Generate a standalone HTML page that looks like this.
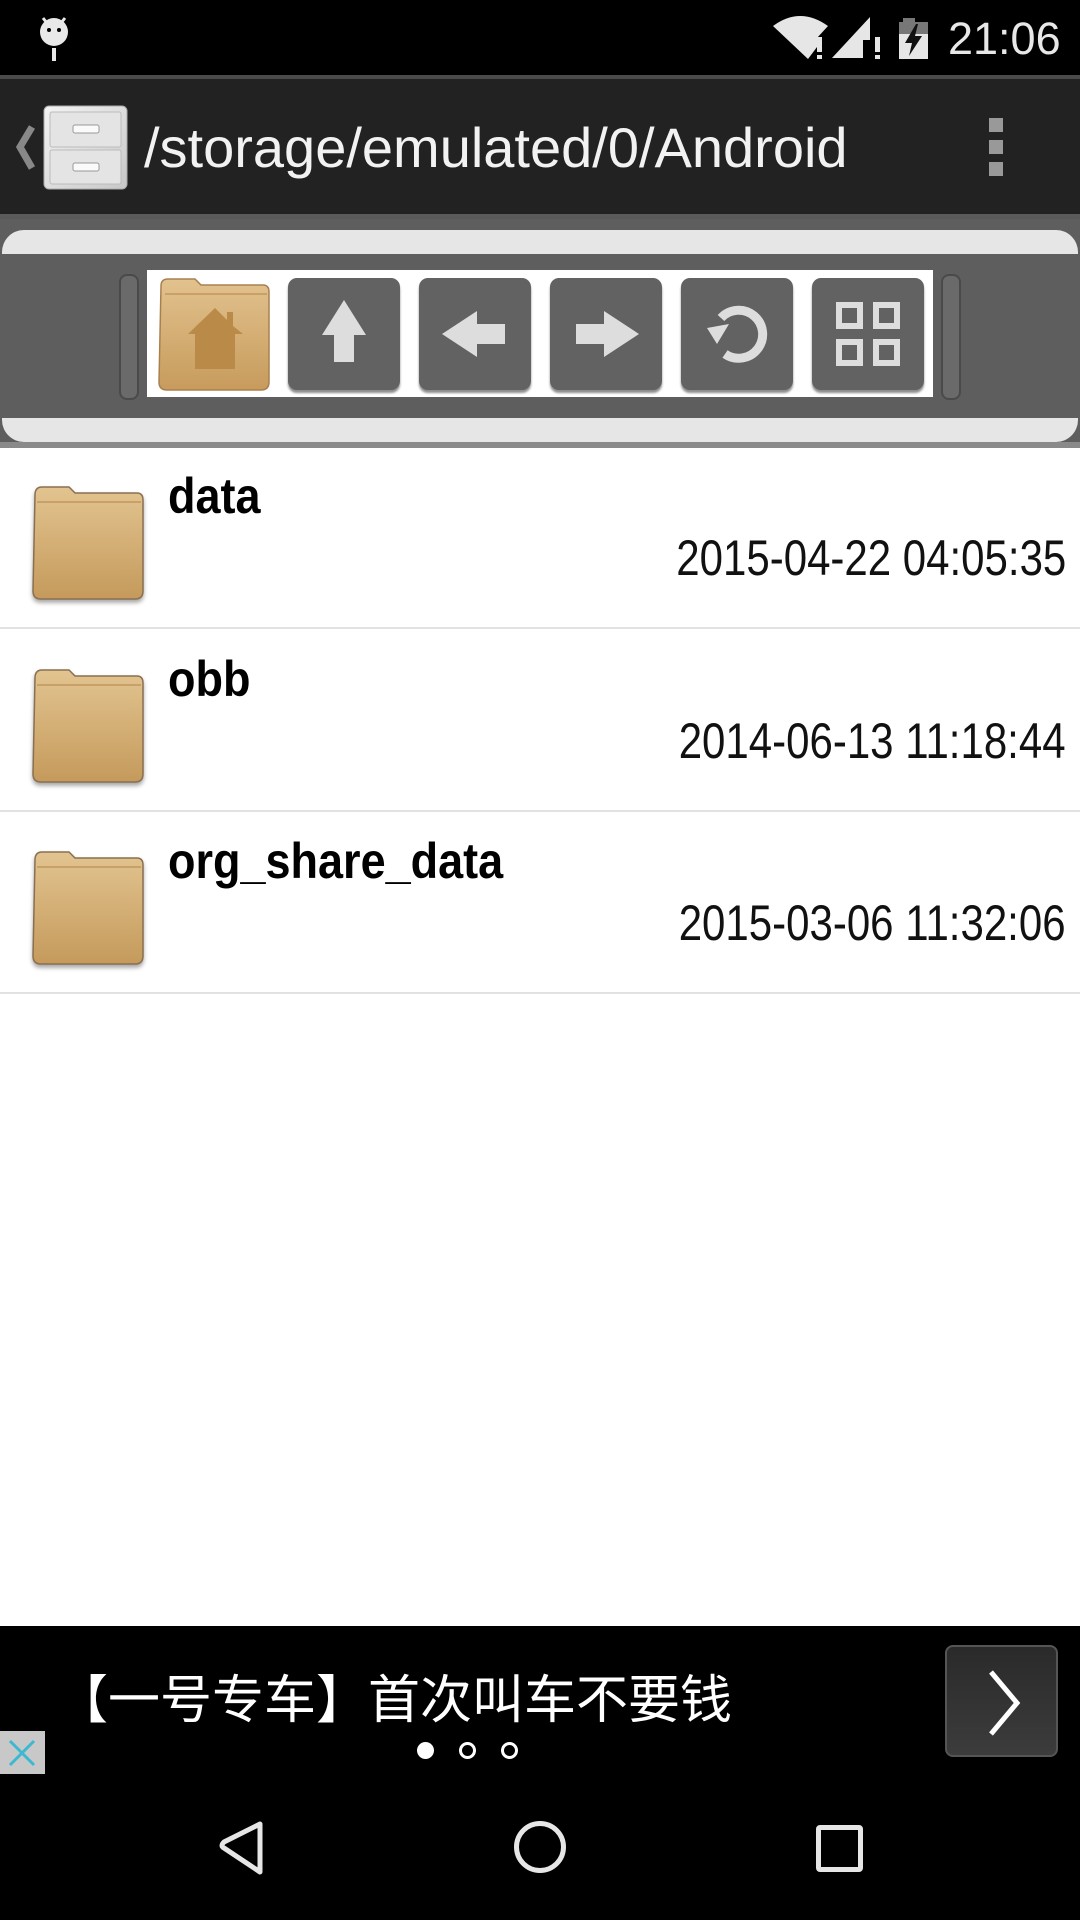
<!DOCTYPE html>
<html><head><meta charset="utf-8"><style>
*{margin:0;padding:0;box-sizing:border-box}
body{width:1080px;height:1920px;position:relative;background:#fff;overflow:hidden;font-family:"Liberation Sans","Noto Sans CJK SC",sans-serif}
.abs{position:absolute}
.btn{position:absolute;top:278px;width:112px;height:112px;border-radius:9px;background:#626262;box-shadow:0 3px 2px rgba(0,0,0,.45)}
.row{position:absolute;left:0;width:1080px;height:182px;border-bottom:2px solid #e2e2e2}
.name{position:absolute;left:168px;top:20px;font-weight:bold;font-size:50px;transform:scaleX(.9);transform-origin:left;color:#000}
.date{position:absolute;right:14px;top:82px;font-size:50px;transform:scaleX(.84);transform-origin:right;color:#111;white-space:nowrap}
.fold{position:absolute;left:29px;top:34px;filter:drop-shadow(0 3px 2px rgba(0,0,0,.35))}
</style></head><body>
<div class="abs" style="left:0;top:0;width:1080px;height:75px;background:#000"></div>
<svg class="abs" style="left:30px;top:10px" width="50" height="55" viewBox="0 0 50 55">
<circle cx="24" cy="22" r="14" fill="#e8e8e8"/><line x1="13" y1="8" x2="17" y2="13" stroke="#e8e8e8" stroke-width="3"/><line x1="35" y1="8" x2="31" y2="13" stroke="#e8e8e8" stroke-width="3"/>
<circle cx="19" cy="20" r="2" fill="#000"/><circle cx="29" cy="20" r="2" fill="#000"/><rect x="22" y="38" width="4" height="13" fill="#e8e8e8"/></svg>
<svg class="abs" style="left:770px;top:12px" width="170" height="50" viewBox="0 0 170 50">
<path d="M3 14 Q30 -6 58 14 L47 26 L47 35 L38 47 Z" fill="#e6e6e6"/>
<rect x="47" y="25" width="5" height="15" fill="#e6e6e6"/><rect x="47" y="43" width="5" height="4" fill="#e6e6e6"/>
<path d="M62 46 L100 5 L100 28 L93 28 L93 46 Z" fill="#e6e6e6"/>
<rect x="105" y="25" width="5" height="15" fill="#e6e6e6"/><rect x="105" y="43" width="5" height="4" fill="#e6e6e6"/>
<rect x="133" y="6" width="12" height="5" fill="#777"/><rect x="129" y="10" width="29" height="12" fill="#777"/><rect x="129" y="22" width="29" height="25" fill="#e6e6e6"/>
<path d="M146 12 L135 31 L142 31 L139 44 L152 24 L145 24 L148 12 Z" fill="#111"/></svg>
<div class="abs" style="left:948px;top:13px;color:#e8e8e8;font-size:45px">21:06</div>
<div class="abs" style="left:0;top:75px;width:1080px;height:4px;background:#4a4a4a"></div>
<div class="abs" style="left:0;top:79px;width:1080px;height:135px;background:#222"></div>
<div class="abs" style="left:0;top:214px;width:1080px;height:5px;background:#5a5a5a"></div>
<svg class="abs" style="left:12px;top:125px" width="24" height="45" viewBox="0 0 24 45"><path d="M20 2 L8 22 L20 43" stroke="#888" stroke-width="7" fill="none"/></svg>
<svg class="abs" style="left:43px;top:105px" width="86" height="86" viewBox="0 0 86 86">
<defs><linearGradient id="cg" x1="0" y1="0" x2="1" y2="1"><stop offset="0" stop-color="#f4f4f4"/><stop offset="1" stop-color="#c8c8c8"/></linearGradient></defs>
<rect x="1" y="1" width="83" height="83" rx="5" fill="url(#cg)" stroke="#aaa"/>
<rect x="7" y="7" width="71" height="35" rx="2" fill="#e4e4e4" stroke="#bbb"/><rect x="7" y="45" width="71" height="34" rx="2" fill="#e4e4e4" stroke="#bbb"/>
<rect x="30" y="20" width="26" height="8" rx="2" fill="#fafafa" stroke="#999"/><rect x="30" y="58" width="26" height="8" rx="2" fill="#fafafa" stroke="#999"/></svg>
<div class="abs" style="left:144px;top:115px;color:#f2f2f2;font-size:56px;white-space:nowrap">/storage/emulated/0/Android</div>
<div class="abs" style="left:989px;top:118px;width:14px;height:14px;background:#999"></div>
<div class="abs" style="left:989px;top:140px;width:14px;height:14px;background:#999"></div>
<div class="abs" style="left:989px;top:162px;width:14px;height:14px;background:#999"></div>
<div class="abs" style="left:0;top:219px;width:1080px;height:228px;background:#5e5e5e"></div>
<div class="abs" style="left:2px;top:230px;width:1076px;height:24px;background:#e6e6e6;border-radius:22px 22px 0 0"></div>
<div class="abs" style="left:2px;top:418px;width:1076px;height:24px;background:#e6e6e6;border-radius:0 0 22px 22px"></div>
<div class="abs" style="left:0;top:442px;width:1080px;height:6px;background:#8a8a8a"></div>
<div class="abs" style="left:119px;top:274px;width:20px;height:126px;border-radius:8px;background:#6a6a6a;border:2px solid #4a4a4a"></div>
<div class="abs" style="left:941px;top:274px;width:20px;height:126px;border-radius:8px;background:#6a6a6a;border:2px solid #4a4a4a"></div>
<div class="abs" style="left:147px;top:270px;width:786px;height:127px;background:#fff"></div>
<svg class="abs" style="left:155px;top:274px" width="118" height="120" viewBox="0 0 118 120">
<defs><linearGradient id="fg" x1="0" y1="0" x2="0" y2="1"><stop offset="0" stop-color="#e2c28e"/><stop offset="1" stop-color="#c79b5c"/></linearGradient></defs>
<path d="M6 12 Q6 5 13 5 L40 5 L46 11 L108 11 Q114 11 114 18 L114 108 Q114 116 106 116 L12 116 Q4 116 4 108 Z" fill="url(#fg)" stroke="#a88050" stroke-width="1.5"/>
<path d="M10 20 L112 20" stroke="#c9a068" stroke-width="2"/>
<path d="M33 60 L60 34 L72 46 L72 38 L78 38 L78 52 L88 60 L80 60 L80 95 L40 95 L40 60 Z" fill="#b98a48"/></svg>
<div class="btn" style="left:288px"></div><div class="btn" style="left:419px"></div><div class="btn" style="left:550px"></div><div class="btn" style="left:681px"></div><div class="btn" style="left:812px"></div>
<svg class="abs" style="left:288px;top:278px" width="112" height="112" viewBox="0 0 112 112"><path d="M56 22 L78 57 L66 57 L66 84 L46 84 L46 57 L34 57 Z" fill="#ddd"/></svg>
<svg class="abs" style="left:419px;top:278px" width="112" height="112" viewBox="0 0 112 112"><path d="M23 56 L58 33 L58 46 L86 46 L86 66 L58 66 L58 79 Z" fill="#ddd"/></svg>
<svg class="abs" style="left:550px;top:278px" width="112" height="112" viewBox="0 0 112 112"><path d="M89 56 L54 33 L54 46 L26 46 L26 66 L54 66 L54 79 Z" fill="#ddd"/></svg>
<svg class="abs" style="left:681px;top:278px" width="112" height="112" viewBox="0 0 112 112"><path d="M40 40 A24 24 0 1 1 44 76" stroke="#ddd" stroke-width="9" fill="none"/><path d="M26 50 L48 46 L36 66 Z" fill="#ddd"/></svg>
<svg class="abs" style="left:812px;top:278px" width="112" height="112" viewBox="0 0 112 112" fill="none" stroke="#ddd" stroke-width="6"><rect x="27" y="27" width="21" height="21"/><rect x="64" y="27" width="21" height="21"/><rect x="27" y="64" width="21" height="21"/><rect x="64" y="64" width="21" height="21"/></svg>
<div class="row" style="top:447px"><svg class="fold" width="118" height="120" viewBox="0 0 118 120"><use href="#fd"/></svg><div class="name">data</div><div class="date">2015-04-22 04:05:35</div></div>
<div class="row" style="top:630px"><svg class="fold" width="118" height="120" viewBox="0 0 118 120"><use href="#fd"/></svg><div class="name">obb</div><div class="date">2014-06-13 11:18:44</div></div>
<div class="row" style="top:812px"><svg class="fold" width="118" height="120" viewBox="0 0 118 120"><use href="#fd"/></svg><div class="name">org_share_data</div><div class="date">2015-03-06 11:32:06</div></div>
<svg width="0" height="0" style="position:absolute"><defs>
<linearGradient id="fg2" x1="0" y1="0" x2="0" y2="1"><stop offset="0" stop-color="#e2c490"/><stop offset="1" stop-color="#c59a5c"/></linearGradient>
<g id="fd"><path d="M6 14 Q6 6 13 6 L40 6 L46 12 L108 12 Q114 12 114 19 L114 110 Q114 118 106 118 L12 118 Q4 118 4 110 Z" fill="url(#fg2)" stroke="#8a7050" stroke-width="1.5"/><path d="M8 21 L112 21" stroke="#c9a068" stroke-width="2"/></g></defs></svg>
<div class="abs" style="left:0;top:1626px;width:1080px;height:294px;background:#000"></div>
<div class="abs" style="left:56px;top:1658px;color:#fff;font-size:52px;white-space:nowrap;font-family:'Noto Sans CJK SC',sans-serif">【一号专车】首次叫车不要钱</div>
<div class="abs" style="left:417px;top:1742px;width:17px;height:17px;border-radius:50%;background:#fff"></div>
<div class="abs" style="left:459px;top:1742px;width:17px;height:17px;border-radius:50%;border:3px solid #fff"></div>
<div class="abs" style="left:501px;top:1742px;width:17px;height:17px;border-radius:50%;border:3px solid #fff"></div>
<div class="abs" style="left:945px;top:1645px;width:113px;height:112px;border-radius:8px;background:linear-gradient(#2a2a2a,#3c3c3c);border:2px solid #555"></div>
<svg class="abs" style="left:985px;top:1668px" width="40" height="70" viewBox="0 0 40 70"><path d="M6 4 L32 35 L6 66" stroke="#fff" stroke-width="5" fill="none"/></svg>
<div class="abs" style="left:0;top:1731px;width:45px;height:43px;background:#c8c8c8"></div>
<svg class="abs" style="left:6px;top:1738px" width="32" height="30" viewBox="0 0 32 30"><path d="M4 3 L28 27 M28 3 L4 27" stroke="#3cb8d0" stroke-width="3"/></svg>
<svg class="abs" style="left:210px;top:1820px" width="60" height="56" viewBox="0 0 60 56"><path d="M50 4 L50 52 L14 28 Q10 26 14 22 Z" stroke="#e6e6e6" stroke-width="5" fill="none" stroke-linejoin="round"/></svg>
<div class="abs" style="left:514px;top:1821px;width:52px;height:52px;border-radius:50%;border:5px solid #e6e6e6"></div>
<div class="abs" style="left:816px;top:1825px;width:47px;height:47px;border-radius:4px;border:5px solid #e6e6e6"></div>
</body></html>
